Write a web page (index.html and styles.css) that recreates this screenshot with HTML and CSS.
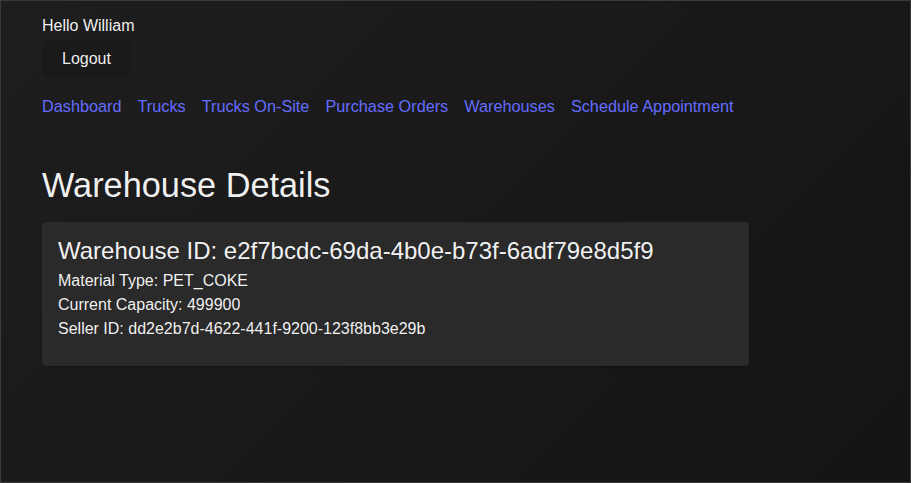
FILE: index.html
```html
<!DOCTYPE html>
<html lang="en">
<head>
<meta charset="utf-8">
<title>Warehouse Details</title>
<link rel="stylesheet" href="styles.css">
</head>
<body>
<div class="app">
  <header class="top">
    <div class="greeting">Hello William</div>
    <button class="logout">Logout</button>
  </header>
  <nav class="nav">
    <a href="#">Dashboard</a>
    <a href="#">Trucks</a>
    <a href="#">Trucks On-Site</a>
    <a href="#">Purchase Orders</a>
    <a href="#">Warehouses</a>
    <a href="#">Schedule Appointment</a>
  </nav>
  <h1 class="title">Warehouse Details</h1>
  <section class="card">
    <h2 class="card-title">Warehouse ID: e2f7bcdc-69da-4b0e-b73f-6adf79e8d5f9</h2>
    <p class="row">Material Type: PET_COKE</p>
    <p class="row">Current Capacity: 499900</p>
    <p class="row">Seller ID: dd2e2b7d-4622-441f-9200-123f8bb3e29b</p>
  </section>
</div>
</body>
</html>
```
FILE: styles.css
```css
html {
  height: 100%;
  box-sizing: border-box;
  border: 1px solid #3a3a3a;
  background: linear-gradient(135deg, #1e1e1e 0%, #141414 100%);
}
body {
  margin: 0;
  min-height: 100%;
  font-family: "Liberation Sans", Arial, sans-serif;
  font-size: 16px;
  line-height: 1.5;
  color: rgba(255, 255, 255, 0.94);
}
.app {
  padding: 13px 41px;
}
.top {
  display: flex;
  flex-direction: column;
  align-items: flex-start;
  gap: 2px;
}
.greeting {
  line-height: 24px;
}
.logout {
  font-family: inherit;
  font-size: 16px;
  line-height: 18px;
  padding: 9px 19px;
  border: 1px solid transparent;
  border-radius: 8px;
  background: #1a1a1a;
  color: rgba(255, 255, 255, 0.94);
  cursor: pointer;
}
.nav {
  display: flex;
  gap: 16px;
  margin-top: 16px;
}
.nav a {
  color: #646cff;
  text-decoration: none;
  font-size: 16.25px;
}
.title {
  margin: 43px 0 0;
  font-size: 34.3px;
  font-weight: 400;
  line-height: 48px;
}
.card {
  margin-top: 13px;
  width: 707px;
  box-sizing: border-box;
  background: #2a2a2a;
  border-radius: 4px;
  padding: 14px 16px 25px;
  box-shadow: 0 1px 2px rgba(0,0,0,0.3);
}
.card-title {
  margin: 0 0 3px;
  font-size: 24px;
  font-weight: 400;
  line-height: 30px;
}
.row {
  margin: 0;
  font-size: 16px;
  line-height: 24px;
}
```
